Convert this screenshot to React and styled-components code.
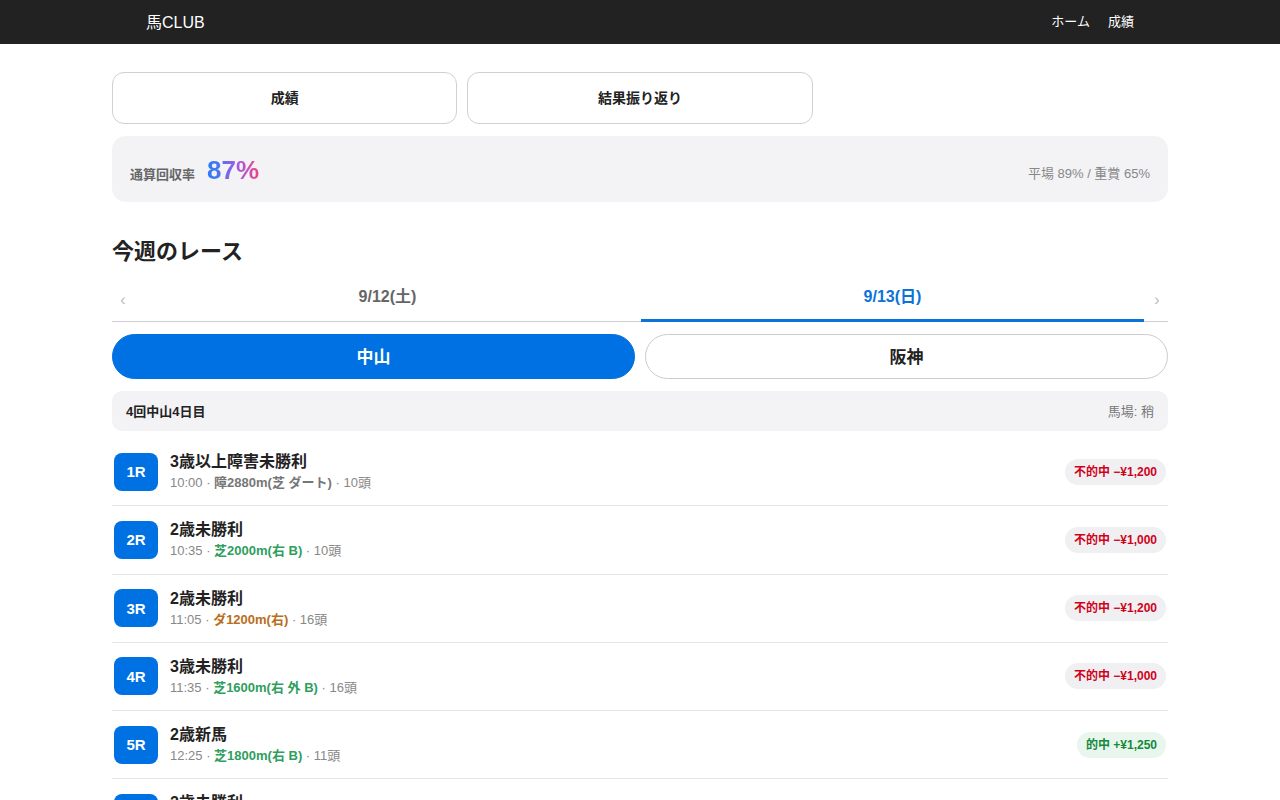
import styled, { createGlobalStyle, css } from "styled-components";

const GlobalStyle = createGlobalStyle`
  body {
    margin: 0;
    background: #ffffff;
    font-family: "Liberation Sans", "Noto Sans CJK JP", sans-serif;
    color: #222222;
  }
`;

const races = [
  { no: "1R", name: "3歳以上障害未勝利", time: "10:00", course: "障2880m(芝 ダート)", kind: "jump", heads: "10頭", hit: false, amount: "−¥1,200" },
  { no: "2R", name: "2歳未勝利", time: "10:35", course: "芝2000m(右 B)", kind: "turf", heads: "10頭", hit: false, amount: "−¥1,000" },
  { no: "3R", name: "2歳未勝利", time: "11:05", course: "ダ1200m(右)", kind: "dirt", heads: "16頭", hit: false, amount: "−¥1,200" },
  { no: "4R", name: "3歳未勝利", time: "11:35", course: "芝1600m(右 外 B)", kind: "turf", heads: "16頭", hit: false, amount: "−¥1,000" },
  { no: "5R", name: "2歳新馬", time: "12:25", course: "芝1800m(右 B)", kind: "turf", heads: "11頭", hit: true, amount: "+¥1,250" },
  { no: "6R", name: "2歳未勝利", time: "12:55", course: "ダ1800m(右)", kind: "dirt", heads: "15頭", hit: false, amount: "−¥1,000" },
];

const App = () => {
  return (
    <>
      <GlobalStyle />
      <Header>
        <HeaderInner>
          <Logo>馬CLUB</Logo>
          <Nav>
            <NavLink>ホーム</NavLink>
            <NavLink>成績</NavLink>
          </Nav>
        </HeaderInner>
      </Header>
      <Main>
        <TopTabs>
          <TopTab>成績</TopTab>
          <TopTab>結果振り返り</TopTab>
        </TopTabs>

        <StatCard>
          <StatLeft>
            <StatLabel>通算回収率</StatLabel>
            <StatValue>87%</StatValue>
          </StatLeft>
          <StatSub>平場 89% / 重賞 65%</StatSub>
        </StatCard>

        <SectionTitle>今週のレース</SectionTitle>

        <DateBar>
          <Chevron>‹</Chevron>
          <DateTab>9/12(土)</DateTab>
          <DateTab $active>9/13(日)</DateTab>
          <Chevron>›</Chevron>
        </DateBar>

        <VenueRow>
          <VenueButton $active>中山</VenueButton>
          <VenueButton>阪神</VenueButton>
        </VenueRow>

        <MeetingBar>
          <MeetingName>4回中山4日目</MeetingName>
          <MeetingCond>馬場: 稍</MeetingCond>
        </MeetingBar>

        <RaceList>
          {races.map((r) => (
            <RaceRow key={r.no}>
              <RaceBadge>{r.no}</RaceBadge>
              <RaceInfo>
                <RaceName>{r.name}</RaceName>
                <RaceMeta>
                  {r.time} · <Course $kind={r.kind}>{r.course}</Course> · {r.heads}
                </RaceMeta>
              </RaceInfo>
              <ResultPill $hit={r.hit}>
                {r.hit ? "的中" : "不的中"} {r.amount}
              </ResultPill>
            </RaceRow>
          ))}
        </RaceList>
      </Main>
    </>
  );
};

export default App;

const Header = styled.header`
  background: #222222;
  height: 44px;
`;

const HeaderInner = styled.div`
  max-width: 988px;
  height: 100%;
  margin: 0 auto;
  padding-bottom: 3px;
  box-sizing: border-box;
  display: flex;
  align-items: center;
  justify-content: space-between;
`;

const Logo = styled.div`
  color: #ffffff;
  font-size: 16px;
`;

const Nav = styled.nav`
  display: flex;
  gap: 18px;
`;

const NavLink = styled.a`
  color: #ffffff;
  font-size: 13px;
  cursor: pointer;
`;

const Main = styled.main`
  max-width: 1056px;
  margin: 0 auto;
  padding-top: 28px;
`;

const TopTabs = styled.div`
  display: grid;
  grid-template-columns: repeat(3, 1fr);
  gap: 10px;
`;

const TopTab = styled.button`
  height: 52px;
  padding-bottom: 3px;
  background: #ffffff;
  border: 1px solid #d0d0d4;
  border-radius: 12px;
  font-family: inherit;
  font-size: 14px;
  font-weight: 700;
  color: #222222;
  cursor: pointer;
`;

const StatCard = styled.div`
  margin-top: 12px;
  height: 66px;
  background: #f3f3f6;
  border-radius: 14px;
  padding: 0 18px;
  display: flex;
  align-items: center;
  justify-content: space-between;
  box-sizing: border-box;
`;

const StatLeft = styled.div`
  display: flex;
  align-items: baseline;
  gap: 12px;
  padding-top: 2px;
`;

const StatLabel = styled.span`
  font-size: 13px;
  font-weight: 700;
  color: #666666;
`;

const StatValue = styled.span`
  font-size: 26px;
  font-weight: 700;
  background: linear-gradient(90deg, #2b7cf7 0%, #4a76f0 22%, #a15ce0 58%, #ee4586 100%);
  -webkit-background-clip: text;
  background-clip: text;
  color: transparent;
`;

const StatSub = styled.span`
  font-size: 13px;
  color: #888888;
  padding-top: 6px;
`;

const SectionTitle = styled.h2`
  margin: 36px 0 0;
  font-size: 22px;
  font-weight: 700;
  line-height: 28px;
  color: #222222;
`;

const DateBar = styled.div`
  margin-top: 12px;
  display: grid;
  grid-template-columns: 22px 1fr 1fr 22px;
  column-gap: 2px;
  border-bottom: 1px solid #cfcfd3;
  height: 43px;
`;

const Chevron = styled.div`
  display: flex;
  align-items: center;
  justify-content: center;
  color: #bbbbbb;
  font-size: 16px;
`;

const DateTab = styled.div`
  display: flex;
  align-items: center;
  justify-content: center;
  font-size: 16px;
  font-weight: 700;
  color: #666666;
  padding-bottom: 10px;
  box-sizing: border-box;
  ${({ $active }) =>
    $active &&
    css`
      color: #0b72d9;
      border-bottom: 3px solid #0b72d9;
      margin-bottom: -1px;
      padding-bottom: 7px;
    `}
`;

const VenueRow = styled.div`
  margin-top: 12px;
  display: grid;
  grid-template-columns: 1fr 1fr;
  gap: 10px;
`;

const VenueButton = styled.button`
  height: 45px;
  border-radius: 23px;
  font-family: inherit;
  font-size: 17px;
  font-weight: 700;
  cursor: pointer;
  padding-bottom: 3px;
  background: ${({ $active }) => ($active ? "#0071e3" : "#ffffff")};
  color: ${({ $active }) => ($active ? "#ffffff" : "#222222")};
  border: 1px solid ${({ $active }) => ($active ? "#0071e3" : "#cccccc")};
`;

const MeetingBar = styled.div`
  margin-top: 12px;
  height: 40px;
  background: #f3f3f6;
  border-radius: 10px;
  padding: 0 14px 2px;
  box-sizing: border-box;
  display: flex;
  align-items: center;
  justify-content: space-between;
`;

const MeetingName = styled.span`
  font-size: 13px;
  font-weight: 700;
  color: #222222;
`;

const MeetingCond = styled.span`
  font-size: 13px;
  color: #777777;
`;

const RaceList = styled.div`
  margin-top: 7px;
`;

const RaceRow = styled.div`
  display: flex;
  align-items: center;
  gap: 12px;
  padding: 13px 2px 13.3px;
  border-bottom: 1px solid #e6e6e9;
`;

const RaceBadge = styled.div`
  width: 44px;
  height: 38px;
  flex-shrink: 0;
  border-radius: 8px;
  background: #0071e3;
  color: #ffffff;
  font-size: 15px;
  font-weight: 700;
  display: flex;
  align-items: center;
  justify-content: center;
`;

const RaceInfo = styled.div`
  flex: 1;
  display: flex;
  flex-direction: column;
`;

const RaceName = styled.div`
  font-size: 16px;
  font-weight: 700;
  line-height: 22px;
  color: #222222;
`;

const RaceMeta = styled.div`
  font-size: 13px;
  line-height: 19px;
  color: #888888;
`;

const courseColors = {
  jump: "#777777",
  turf: "#2f9e5e",
  dirt: "#b86e1a",
};

const Course = styled.span`
  font-weight: 700;
  color: ${({ $kind }) => courseColors[$kind]};
`;

const ResultPill = styled.span`
  flex-shrink: 0;
  font-size: 12px;
  font-weight: 700;
  line-height: 26px;
  padding: 0 9px;
  border-radius: 13px;
  background: ${({ $hit }) => ($hit ? "#e8f6ed" : "#f0f0f3")};
  color: ${({ $hit }) => ($hit ? "#148a3c" : "#d0021b")};
`;
